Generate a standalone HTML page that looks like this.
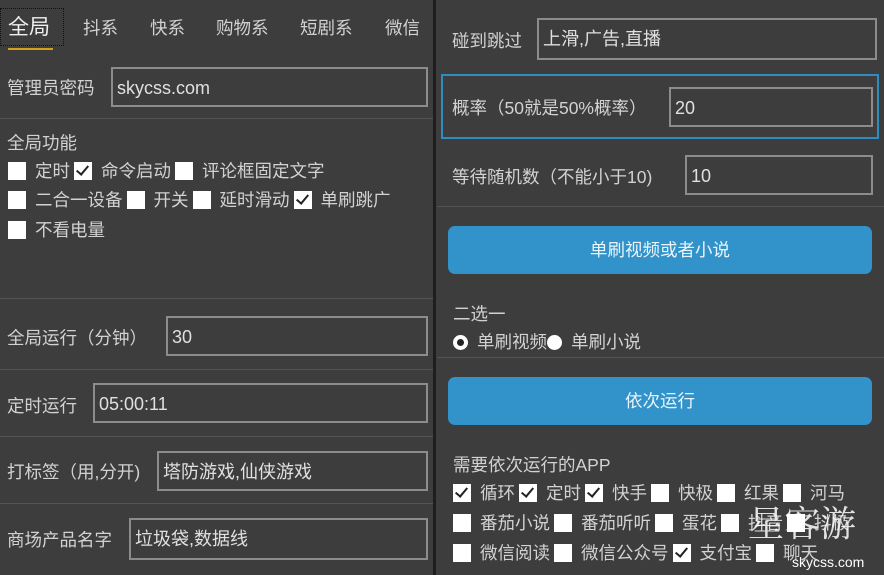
<!DOCTYPE html>
<html><head><meta charset="utf-8"><style>
*{box-sizing:border-box;margin:0;padding:0}
body{width:884px;height:575px;background:#3d3d3d;position:relative;overflow:hidden;font-family:"Liberation Sans","Noto Sans CJK SC",sans-serif;color:#d2d2d2;font-size:17.5px}
.a{position:absolute;white-space:nowrap;line-height:20px}
.in{position:absolute;border:2px solid #8c8c8c;padding-left:4px;line-height:38px;color:#e0e0e0;font-size:18px}
.hr{position:absolute;height:1px;background:#545454}
.cb{display:inline-block;width:18px;height:18px;background:#fff;vertical-align:-3px;margin-right:9px;margin-left:4px;position:relative}
.a>.cb:first-child{margin-left:0}
.cb.c::after{content:"";position:absolute;left:5px;top:1px;width:5px;height:10px;border:solid #222;border-width:0 2px 2px 0;transform:rotate(40deg)}
.btn{position:absolute;background:#3193c9;border-radius:7px;color:#eaf4fa;text-align:center;font-size:17.5px}
.rd{display:inline-block;width:15px;height:15px;border-radius:50%;background:#fff;vertical-align:-2px;margin-right:9px;position:relative}
.rd.on::after{content:"";position:absolute;left:4px;top:4px;width:7px;height:7px;border-radius:50%;background:#222}
</style></head><body>
<div style="position:absolute;left:433px;top:0;width:3px;height:575px;background:#1e1e1e"></div>
<div style="position:absolute;left:0;top:8px;width:64px;height:38px;border:1px dotted #111"></div>
<div class="a" style="left:8px;top:15px;font-size:21px;line-height:26px;color:#f0f0f0">全局</div>
<div style="position:absolute;left:8px;top:48px;width:45px;height:2px;background:#d4a21a"></div>
<div class="a" style="left:83px;top:18px;font-size:17.5px">抖系</div>
<div class="a" style="left:150px;top:18px;font-size:17.5px">快系</div>
<div class="a" style="left:216px;top:18px;font-size:17.5px">购物系</div>
<div class="a" style="left:300px;top:18px;font-size:17.5px">短剧系</div>
<div class="a" style="left:385px;top:18px;font-size:17.5px">微信</div>
<div class="a" style="left:7px;top:78px">管理员密码</div>
<div class="in" style="left:111px;top:67px;width:317px;height:40px">skycss.com</div>
<div class="hr" style="left:0;top:118px;width:433px"></div>
<div class="a" style="left:7px;top:133px">全局功能</div>
<div class="a" style="left:8px;top:161px"><span class="cb"></span>定时<span class="cb c"></span>命令启动<span class="cb"></span>评论框固定文字</div>
<div class="a" style="left:8px;top:190px"><span class="cb"></span>二合一设备<span class="cb"></span>开关<span class="cb"></span>延时滑动<span class="cb c"></span>单刷跳广</div>
<div class="a" style="left:8px;top:220px"><span class="cb"></span>不看电量</div>
<div class="hr" style="left:0;top:298px;width:433px"></div>
<div class="a" style="left:7px;top:328px">全局运行（分钟）</div>
<div class="in" style="left:166px;top:316px;width:262px;height:40px">30</div>
<div class="hr" style="left:0;top:369px;width:433px"></div>
<div class="a" style="left:7px;top:396px">定时运行</div>
<div class="in" style="left:93px;top:383px;width:335px;height:40px">05:00:11</div>
<div class="hr" style="left:0;top:436px;width:433px"></div>
<div class="a" style="left:7px;top:462px">打标签（用,分开)</div>
<div class="in" style="left:157px;top:451px;width:271px;height:40px">塔防游戏,仙侠游戏</div>
<div class="hr" style="left:0;top:503px;width:433px"></div>
<div class="a" style="left:7px;top:530px">商场产品名字</div>
<div class="in" style="left:129px;top:518px;width:299px;height:42px">垃圾袋,数据线</div>
<div class="a" style="left:452px;top:31px">碰到跳过</div>
<div class="in" style="left:537px;top:18px;width:340px;height:42px">上滑,广告,直播</div>
<div style="position:absolute;left:441px;top:74px;width:438px;height:65px;border:2px solid #2f8cc0"></div>
<div class="a" style="left:452px;top:98px">概率（50就是50%概率）</div>
<div class="in" style="left:669px;top:87px;width:204px;height:40px">20</div>
<div class="a" style="left:452px;top:167px">等待随机数（不能小于10)</div>
<div class="in" style="left:685px;top:155px;width:188px;height:40px">10</div>
<div class="hr" style="left:437px;top:206px;width:447px"></div>
<div class="btn" style="left:448px;top:226px;width:424px;height:48px;line-height:48px">单刷视频或者小说</div>
<div class="a" style="left:453px;top:304px">二选一</div>
<div class="a" style="left:453px;top:332px"><span class="rd on"></span>单刷视频<span class="rd"></span>单刷小说</div>
<div class="hr" style="left:437px;top:357px;width:447px"></div>
<div class="btn" style="left:448px;top:377px;width:424px;height:48px;line-height:48px">依次运行</div>
<div class="a" style="left:453px;top:455px">需要依次运行的APP</div>
<div class="a" style="left:453px;top:483px"><span class="cb c"></span>循环<span class="cb c"></span>定时<span class="cb c"></span>快手<span class="cb"></span>快极<span class="cb"></span>红果<span class="cb"></span>河马</div>
<div class="a" style="left:453px;top:513px"><span class="cb"></span>番茄小说<span class="cb"></span>番茄听听<span class="cb"></span>蛋花<span class="cb"></span>抖音<span class="cb"></span>抖极</div>
<div class="a" style="left:453px;top:543px"><span class="cb"></span>微信阅读<span class="cb"></span>微信公众号<span class="cb c"></span>支付宝<span class="cb"></span>聊天</div>
<div class="a" style="left:748px;top:502px;font-size:36px;line-height:40px;color:#fff;font-family:'Noto Serif CJK SC',serif;opacity:.85">星客游</div>
<div class="a" style="left:792px;top:552px;font-size:14px;color:#fff">skycss.com</div>
</body></html>
